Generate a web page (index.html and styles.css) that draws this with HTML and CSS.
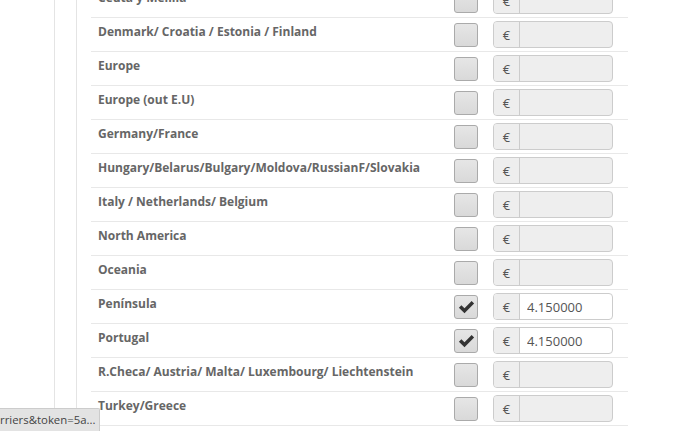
FILE: index.html
```html
<!DOCTYPE html>
<html lang="en">
<head>
    <meta charset="UTF-8">
    <title>Carrier zones</title>
    <link rel="stylesheet" href="styles.css">
</head>
<body>
    <div class="page">
        <div class="panel">
            <div class="zones" id="zones">
                <!-- zone rows are generated here -->
            </div>
        </div>
    </div>

    <div class="status-url">rriers&amp;token=5a...</div>

    <script>
        const zones = [
            ["Ceuta y Melilla", ""],
            ["Denmark/ Croatia / Estonia / Finland", ""],
            ["Europe", ""],
            ["Europe (out E.U)", ""],
            ["Germany/France", ""],
            ["Hungary/Belarus/Bulgary/Moldova/RussianF/Slovakia", ""],
            ["Italy / Netherlands/ Belgium", ""],
            ["North America", ""],
            ["Oceania", ""],
            ["Península", "4.150000"],
            ["Portugal", "4.150000"],
            ["R.Checa/ Austria/ Malta/ Luxembourg/ Liechtenstein", ""],
            ["Turkey/Greece", ""]
        ];

        const list = document.getElementById("zones");
        const check = '<svg viewBox="0 0 20 20" width="19" height="19"><path d="M2 11.2l2.6-2.6 3.3 3.3 7.5-7.6 2.6 2.6-10.1 10.2z" fill="#333"/></svg>';

        zones.forEach(function(zone) {
            const active = zone[1] !== "";
            const row = document.createElement("div");
            row.className = "zone-row";
            row.innerHTML =
                '<span class="zone-name">' + zone[0] + '</span>' +
                '<span class="check-box">' + (active ? check : '') + '</span>' +
                '<span class="price-group' + (active ? '' : ' disabled') + '">' +
                    '<span class="addon">€</span>' +
                    '<input type="text" value="' + zone[1] + '"' + (active ? '' : ' disabled') + '>' +
                '</span>';
            list.appendChild(row);
        });
    </script>
</body>
</html>
```

FILE: styles.css
```css
body {
    margin: 0;
    background: #fff;
    font-family: "Open Sans", Arial, sans-serif;
    color: #666;
    overflow: hidden;
}
.page {
    margin-left: 54px;
    border-left: 1px solid #e4e4e4;
    padding-left: 21px;
    height: 431px;
}
.panel {
    display: flow-root;
    border-left: 1px solid #e4e4e4;
    padding-left: 14px;
    height: 100%;
}
.zones {
    width: 537px;
    margin-top: -16px;
}
.zone-row {
    display: grid;
    grid-template-columns: 1fr 24px 120px;
    column-gap: 15px;
    align-items: center;
    height: 33px;
    padding-right: 15px;
    border-bottom: 1px solid #e8e8e8;
}
.zone-name {
    padding-left: 7px;
    font-size: 12px;
    font-weight: bold;
    color: #666;
    margin-top: -6px;
}
.check-box {
    box-sizing: border-box;
    width: 24px;
    height: 24px;
    border: 1px solid #aaa;
    border-radius: 3px;
    background: linear-gradient(#e6e6e6, #d9d9d9);
    display: flex;
    align-items: center;
    justify-content: center;
}
.price-group {
    box-sizing: border-box;
    display: flex;
    height: 27px;
    border: 1px solid #ccc;
    border-radius: 4px;
    background: #fff;
    overflow: hidden;
}
.price-group.disabled {
    background: #eee;
}
.addon {
    width: 25px;
    flex: none;
    display: flex;
    align-items: center;
    justify-content: center;
    background: #eee;
    border-right: 1px solid #ccc;
    font-size: 13px;
    color: #555;
}
.price-group input {
    flex: 1;
    min-width: 0;
    border: none;
    background: transparent;
    padding: 0 7px;
    font-family: "Open Sans", Arial, sans-serif;
    font-size: 13px;
    color: #555;
    outline: none;
}

/* browser status bar */
.status-url {
    position: fixed;
    left: 0;
    bottom: 0;
    width: 99px;
    height: 22px;
    line-height: 22px;
    background: #e3e3e3;
    border-top: 1px solid #ccc;
    border-right: 1px solid #ccc;
    border-top-right-radius: 2px;
    font-size: 11.4px;
    color: #444;
    white-space: nowrap;
    overflow: hidden;
}
```
